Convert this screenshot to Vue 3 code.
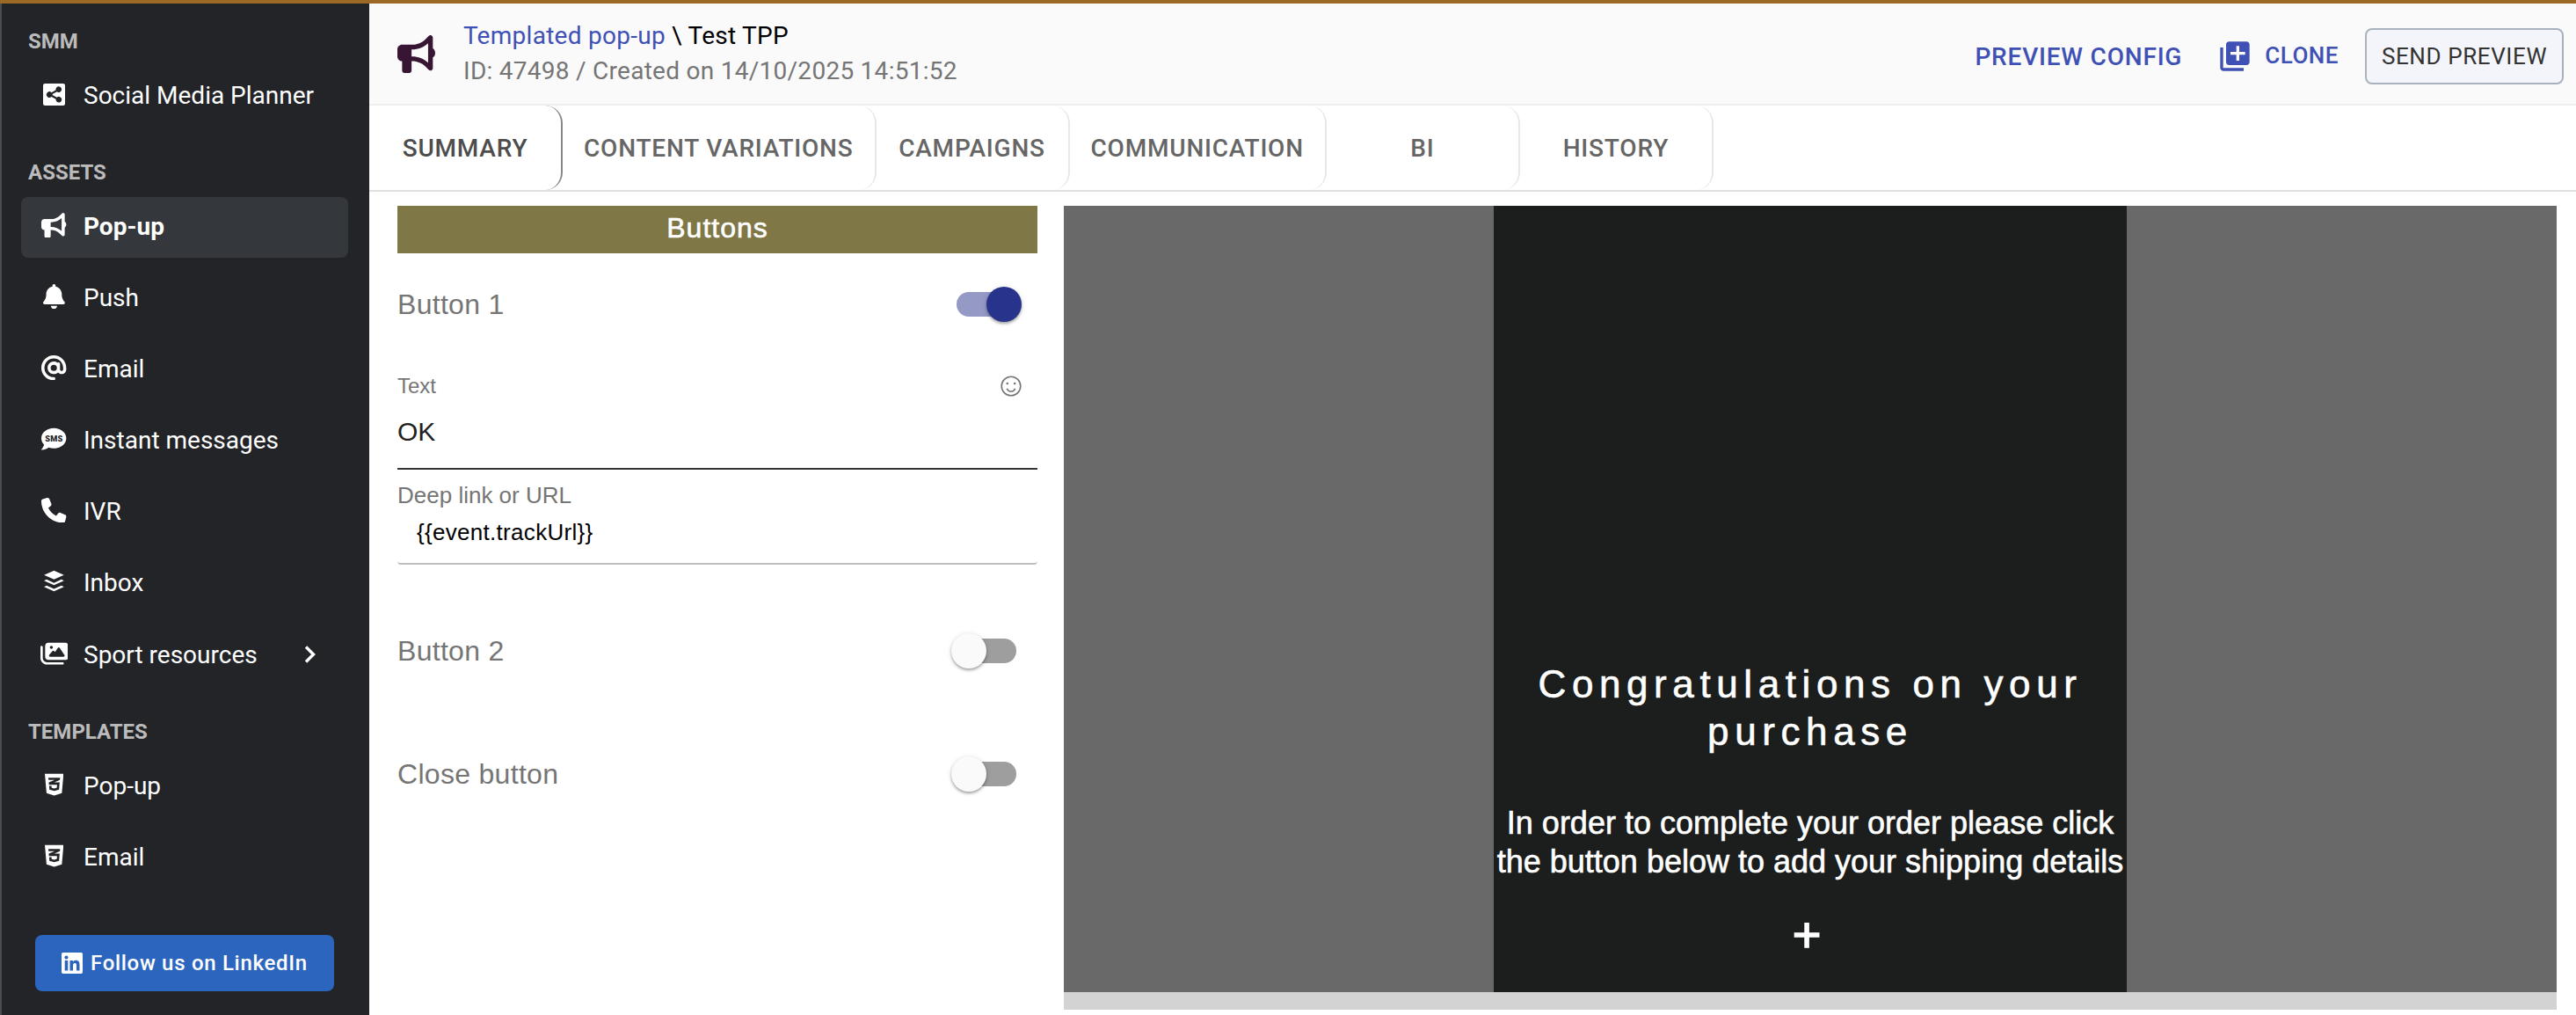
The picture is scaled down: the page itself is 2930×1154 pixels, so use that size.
<script setup>
import { ref } from 'vue'

const icons = {
  share: {
    box: '0 32 448 448',
    d: 'M40 32H408Q448 32 448 72V440Q448 480 408 480H40Q0 480 0 440V72Q0 32 40 32ZM320 92a60 60 0 0 0-59 72l-89 50a60 60 0 1 0 0 86l89 50a60 60 0 1 0 20-37l-90-47v-20l90-47A60 60 0 1 0 320 92Z',
  },
  bullhorn: {
    box: '0 0 512 512',
    d: 'M480 32c0-12.9-7.8-24.6-19.8-29.6s-25.7-2.2-34.9 6.9L381.7 53c-48 48-113.1 75-181 75H64c-35.3 0-64 28.7-64 64v96c0 35.3 28.7 64 64 64v128c0 17.7 14.3 32 32 32h64c17.7 0 32-14.3 32-32V352h8.7c67.9 0 133 27 181 75l43.6 43.6c9.2 9.2 22.9 11.9 34.9 6.9s19.8-16.6 19.8-29.6V300.4c18.6-8.8 32-32.5 32-60.4s-13.4-51.6-32-60.4V32zm-64 76.7v262.6C357.2 317.8 280.5 288 200.7 288H192v-96h8.7c79.8 0 156.5-29.8 215.3-83.3z',
  },
  bell: {
    box: '0 0 448 512',
    d: 'M224 0c-17.7 0-32 14.3-32 32v19.2C119 66 64 130.6 64 208v18.8c0 47-17.3 92.4-48.5 127.6l-7.4 8.3c-8.4 9.4-10.4 22.9-5.3 34.4S19.4 416 32 416h384c12.6 0 24-7.4 29.2-18.9s3.1-25-5.3-34.4l-7.4-8.3C401.3 319.2 384 273.9 384 226.8V208c0-77.4-55-142-128-156.8V32c0-17.7-14.3-32-32-32zm45.3 493.3c12-12 18.7-28.3 18.7-45.3H160c0 17 6.7 33.3 18.7 45.3s28.3 18.7 45.3 18.7 33.3-6.7 45.3-18.7z',
  },
  at: {
    box: '0 0 512 512',
    d: 'M256 64C150 64 64 150 64 256s86 192 192 192c17.7 0 32 14.3 32 32s-14.3 32-32 32C114.6 512 0 397.4 0 256S114.6 0 256 0s256 114.6 256 256v32c0 53-43 96-96 96-29.3 0-55.6-13.2-73.2-33.9C320 371.1 289.5 384 256 384c-70.7 0-128-57.3-128-128s57.3-128 128-128c27.9 0 53.7 8.9 74.7 24.1 5.7-5 13.1-8.1 21.3-8.1 17.7 0 32 14.3 32 32v112c0 17.7 14.3 32 32 32s32-14.3 32-32v-32c0-106-86-192-192-192zm64 192a64 64 0 1 0-128 0 64 64 0 1 0 128 0z',
  },
  sms: {
    box: '0 0 512 512',
    d: 'M256 32C114.6 32 0 125.1 0 240c0 49.6 21.4 95 57 130.7C44.5 421.1 2.7 466 2.2 466.5c-2.2 2.3-2.8 5.7-1.5 8.7S4.8 480 8 480c66.3 0 116-31.8 140.6-51.4 32.7 12.3 69 19.4 107.4 19.4 141.4 0 256-93.1 256-208S397.4 32 256 32z',
    label: 'SMS',
  },
  phone: {
    box: '0 0 512 512',
    d: 'M164.9 24.6c-7.7-18.6-28-28.5-47.4-23.2l-88 24C12.1 30.2 0 46 0 64c0 247.4 200.6 448 448 448 18 0 33.8-12.1 38.6-29.5l24-88c5.3-19.4-4.6-39.7-23.2-47.4l-96-40c-16.3-6.8-35.2-2.1-46.3 11.6L304.7 368C234.3 334.7 177.3 277.7 144 207.3L193.3 167c13.7-11.2 18.4-30 11.6-46.3l-40-96z',
  },
  buffer: {
    box: '0 0 448 512',
    d: 'M224 30L428 122L224 210L20 122ZM20 238L72 214L224 282L376 214L428 238L224 328ZM20 364L72 340L224 408L376 340L428 364L224 456Z',
  },
  images: {
    box: '0 0 576 512',
    d: 'M160 32c-35.3 0-64 28.7-64 64v224c0 35.3 28.7 64 64 64h352c35.3 0 64-28.7 64-64V96c0-35.3-28.7-64-64-64H160zm236 106.7l96 144c4.9 7.4 5.4 16.8 1.2 24.6S480.9 320 472 320H200c-9.2 0-17.6-5.3-21.6-13.6s-2.9-18.2 2.9-25.4l64-80c4.6-5.7 11.4-9 18.7-9s14.2 3.3 18.7 9l17.3 21.6 56-84C360.5 132 368 128 376 128s15.5 4 20 10.7zM192 128a32 32 0 1 1 64 0 32 32 0 1 1-64 0zM48 120c0-13.3-10.7-24-24-24S0 106.7 0 120v224c0 75.1 60.9 136 136 136h320c13.3 0 24-10.7 24-24s-10.7-24-24-24H136c-48.6 0-88-39.4-88-88V120z',
  },
  css3: {
    box: '0 0 384 512',
    d: 'M0 32l34.9 395.8L192 480l157.1-52.2L384 32H0zm313.1 80l-4.8 47.3L193 208.6l-.3.1h111.5l-12.8 146.6-98.2 28.7-98.8-29.2-6.4-73.9h48.9l3.2 38.3 52.6 13.3 54.7-15.4 3.7-61.6-166.3-.5v-.1l-.2.1-3.6-46.3L193.1 162l6.5-2.7H76.7L70.9 112h242.2z',
  },
}

const menu = [
  { title: 'SMM', items: [{ label: 'Social Media Planner', icon: 'share' }] },
  {
    title: 'ASSETS',
    items: [
      { label: 'Pop-up', icon: 'bullhorn', active: true },
      { label: 'Push', icon: 'bell' },
      { label: 'Email', icon: 'at' },
      { label: 'Instant messages', icon: 'sms' },
      { label: 'IVR', icon: 'phone' },
      { label: 'Inbox', icon: 'buffer' },
      { label: 'Sport resources', icon: 'images', expandable: true },
    ],
  },
  {
    title: 'TEMPLATES',
    items: [
      { label: 'Pop-up', icon: 'css3' },
      { label: 'Email', icon: 'css3' },
    ],
  },
]

const tabs = ['SUMMARY', 'CONTENT VARIATIONS', 'CAMPAIGNS', 'COMMUNICATION', 'BI', 'HISTORY']
const activeTab = ref('SUMMARY')

const button1 = ref(true)
const button2 = ref(false)
const closeButton = ref(false)
const deepLink = '{{event.trackUrl}}'
</script>

<template>
  <div class="app">
    <aside class="sidebar">
      <section v-for="group in menu" :key="group.title" class="group">
        <h3 class="group-title">{{ group.title }}</h3>
        <a
          v-for="item in group.items"
          :key="item.label"
          class="item"
          :class="{ active: item.active, expandable: item.expandable }"
        >
          <span class="item-icon">
            <svg :viewBox="icons[item.icon].box" :class="item.icon">
              <path :d="icons[item.icon].d" fill="currentColor" fill-rule="evenodd" />
              <text v-if="icons[item.icon].label" class="sms-text" x="258" y="300">{{ icons[item.icon].label }}</text>
            </svg>
          </span>
          <span class="item-label">{{ item.label }}</span>
          <svg v-if="item.expandable" class="chevron" viewBox="0 0 14 20">
            <path d="M2 1.5L10.5 10L2 18.5" fill="none" stroke="currentColor" stroke-width="3.4" />
          </svg>
        </a>
      </section>
      <a class="linkedin">
        <svg viewBox="0 32 448 448">
          <path
            fill="currentColor"
            fill-rule="evenodd"
            d="M416 32H31.9C14.3 32 0 46.5 0 64.3v383.4C0 465.5 14.3 480 31.9 480H416c17.6 0 32-14.5 32-32.3V64.3c0-17.8-14.4-32.3-32-32.3zM135.4 416H69V202.2h66.5V416zm-33.2-243c-21.3 0-38.5-17.3-38.5-38.5S80.9 96 102.2 96c21.2 0 38.5 17.3 38.5 38.5 0 21.3-17.2 38.5-38.5 38.5zm282.1 243h-66.4V312c0-24.8-.5-56.7-34.5-56.7-34.6 0-39.9 27-39.9 54.9V416h-66.4V202.2h63.7v29.2h.9c8.9-16.8 30.6-34.5 62.2-34.5 66.5 0 78.9 43.8 78.9 100.9V416z"
          />
        </svg>
        <span>Follow us on LinkedIn</span>
      </a>
    </aside>

    <main class="main">
      <header class="header">
        <svg class="header-icon" :viewBox="icons.bullhorn.box">
          <path :d="icons.bullhorn.d" fill="currentColor" fill-rule="evenodd" />
        </svg>
        <div class="titles">
          <div class="crumbs"><a>Templated pop-up</a> \ Test TPP</div>
          <div class="meta">ID: 47498 / Created on 14/10/2025 14:51:52</div>
        </div>
        <div class="actions">
          <button class="text-btn config">PREVIEW CONFIG</button>
          <button class="text-btn clone">
            <svg viewBox="0 0 24 24">
              <path
                fill="currentColor"
                d="M4 6H2v14c0 1.1.9 2 2 2h14v-2H4V6zm16-4H8c-1.1 0-2 .9-2 2v12c0 1.1.9 2 2 2h12c1.1 0 2-.9 2-2V4c0-1.1-.9-2-2-2zm-1 9h-4v4h-2v-4H9V9h4V5h2v4h4v2z"
              />
            </svg>
            <span>CLONE</span>
          </button>
          <button class="send">SEND PREVIEW</button>
        </div>
      </header>

      <nav class="tabs">
        <button
          v-for="tab in tabs"
          :key="tab"
          class="tab"
          :class="{ active: tab === activeTab }"
          @click="activeTab = tab"
        >
          {{ tab }}
        </button>
      </nav>

      <div class="content">
        <form class="form" @submit.prevent>
          <div class="bar">Buttons</div>

          <div class="row first">
            <span>Button 1</span>
            <span class="toggle" :class="{ on: button1 }" @click="button1 = !button1"></span>
          </div>

          <div class="field text-field">
            <div class="field-head">
              <span>Text</span>
              <svg class="smiley" viewBox="0 0 24 24" fill="none" stroke="currentColor" stroke-width="1.6">
                <circle cx="12" cy="12" r="10.8" />
                <path d="M7.2 14.8Q8.8 18 12 18T16.8 14.8" />
                <circle cx="7.8" cy="9" r="1.3" fill="currentColor" stroke="none" />
                <circle cx="16.2" cy="9" r="1.3" fill="currentColor" stroke="none" />
              </svg>
            </div>
            <div class="field-value">OK</div>
          </div>

          <div class="field link-field">
            <div class="field-head">Deep link or URL</div>
            <div class="field-value">{{ deepLink }}</div>
          </div>

          <div class="row second">
            <span>Button 2</span>
            <span class="toggle" :class="{ on: button2 }" @click="button2 = !button2"></span>
          </div>
          <div class="row third">
            <span>Close button</span>
            <span class="toggle" :class="{ on: closeButton }" @click="closeButton = !closeButton"></span>
          </div>
        </form>

        <div class="preview">
          <div class="screen">
            <div class="popup">
              <h1>Congratulations on your<br />purchase</h1>
              <p>In order to complete your order please click<br />the button below to add your shipping details</p>
              <div class="plus">+</div>
            </div>
          </div>
        </div>
      </div>
    </main>
  </div>
</template>

<style>
body {
  margin: 0;
  background: #fff;
}
</style>

<style scoped>
* {
  box-sizing: border-box;
}

.app {
  display: flex;
  width: 2930px;
  height: 1154px;
  overflow: hidden;
  border-top: 4px solid #9c6825;
  background: #fff;
  font-family: Roboto, sans-serif;
}

svg {
  display: block;
  flex: none;
}

button {
  margin: 0;
  padding: 0;
  border: 0;
  background: none;
  font-family: inherit;
}

/* sidebar */
.sidebar {
  flex: none;
  width: 420px;
  padding: 29px 24px 0 22px;
  border-left: 2px solid #4b4c4f;
  background: #232427;
  color: #fff;
}

.group {
  display: flow-root;
  margin-bottom: 26px;
}

.group-title {
  margin: 0 0 14px 8px;
  font-size: 24px;
  font-weight: 700;
  line-height: 28px;
  color: #bbbbbc;
}

.item {
  display: flex;
  align-items: center;
  height: 69px;
  margin-bottom: 12px;
  padding-bottom: 3px;
  border-radius: 8px;
  font-size: 28px;
}

.item.active {
  background: #34373c;
  font-weight: 700;
}

.item.expandable {
  margin-top: 13px;
}

.item-icon {
  display: flex;
  justify-content: center;
  width: 75px;
  padding-bottom: 2px;
}

.item-icon svg {
  height: 28.4px;
}

.item-icon svg.share {
  height: 25px;
}

.sms-text {
  font-size: 165px;
  font-weight: 900;
  text-anchor: middle;
  letter-spacing: 4px;
  fill: #232427;
}

.item-label {
  margin-left: -4px;
  padding-top: 1px;
  line-height: 34px;
}

.chevron {
  width: 14px;
  height: 20px;
  margin-left: auto;
  margin-right: 36px;
}

.linkedin {
  display: flex;
  align-items: center;
  width: 340px;
  height: 64px;
  margin: 41px 0 0 16px;
  padding: 0 0 1px 30px;
  border-radius: 8px;
  background: #2c65bd;
  font-size: 24px;
  font-weight: 500;
  letter-spacing: 0.7px;
}

.linkedin svg {
  width: 24px;
  height: 24px;
  margin-right: 9px;
}

/* header */
.main {
  flex: 1;
  min-width: 0;
}

.header {
  display: flex;
  height: 116px;
  padding: 0 14px 0 32px;
  border-bottom: 2px solid #eee;
  background: #fafafa;
}

.header-icon {
  width: 43px;
  height: 43px;
  margin-top: 36px;
  color: #371533;
}

.titles {
  margin: 17px 0 0 32px;
  font-size: 28px;
  line-height: 40px;
  letter-spacing: 0.27px;
  color: #000;
}

.crumbs a {
  color: #3f51b5;
}

.meta {
  color: #757575;
}

.actions {
  display: flex;
  align-items: flex-start;
  margin-left: auto;
}

.text-btn {
  display: flex;
  align-items: center;
  height: 64px;
  margin-top: 28px;
  font-size: 28px;
  font-weight: 500;
  color: #3f51b5;
}

.config {
  letter-spacing: 0.8px;
}

.clone {
  margin: 27px 30px 0 40px;
  font-size: 26px;
  letter-spacing: 0.5px;
}

.clone svg {
  width: 40px;
  height: 40px;
  margin: 2px 14px 0 0;
}

.send {
  width: 226px;
  height: 64px;
  margin-top: 28px;
  border: 2px solid #a9b1bc;
  border-radius: 8px;
  background: #f4f5fa;
  font-size: 26px;
  letter-spacing: 0.6px;
  color: #333;
}

/* tabs */
.tabs {
  display: flex;
  height: 98px;
  border-bottom: 2px solid #e0e0e0;
}

.tab {
  min-width: 220px;
  height: 96px;
  padding: 1px 24px 0;
  border-right: 2px solid #e8e8e8;
  border-radius: 20px;
  font-size: 28px;
  font-weight: 500;
  letter-spacing: 0.8px;
  color: #666;
}

.tab.active {
  border-right-color: #888;
  color: #4d4d4d;
}

/* form */
.content {
  display: flex;
  gap: 30px;
  padding: 16px 22px 0 32px;
  font-family: 'Liberation Sans', Helvetica, sans-serif;
}

.form {
  flex: none;
  width: 728px;
}

.bar {
  height: 54px;
  padding-bottom: 4px;
  background: #7f7745;
  font-size: 32px;
  line-height: 50px;
  letter-spacing: 1px;
  text-align: center;
  color: #fff;
  -webkit-text-stroke: 0.6px #fff;
}

.row {
  display: flex;
  justify-content: space-between;
  height: 40px;
  padding-right: 18px;
  font-size: 32px;
  line-height: 40px;
  letter-spacing: 0.3px;
  color: #757575;
}

.row.first {
  margin-top: 38px;
}

.row.second {
  margin-top: 78px;
}

.row.third {
  margin-top: 100px;
}

.toggle {
  position: relative;
  width: 80px;
  height: 40px;
}

.toggle::before {
  content: '';
  position: absolute;
  top: 6px;
  left: 2px;
  width: 72px;
  height: 28px;
  border-radius: 14px;
  background: #9e9e9e;
}

.toggle::after {
  content: '';
  position: absolute;
  top: 0;
  left: 0;
  width: 40px;
  height: 40px;
  border-radius: 50%;
  background: #fafafa;
  box-shadow: 0 2px 3px rgba(0, 0, 0, 0.3), 0 1px 6px rgba(0, 0, 0, 0.12);
}

.toggle.on::before {
  left: 6px;
  background: #9499c6;
}

.toggle.on::after {
  left: 40px;
  background: #28348b;
}

.field-head {
  display: flex;
  justify-content: space-between;
  align-items: center;
  height: 30px;
  color: #757575;
}

.text-field {
  margin-top: 58px;
  padding-bottom: 21px;
  border-bottom: 2px solid #333;
  font-size: 24px;
}

.smiley {
  width: 24px;
  height: 24px;
  margin-right: 18px;
}

.text-field .field-value {
  margin-top: 17px;
  font-size: 30px;
  line-height: 40px;
  color: #212121;
}

.link-field {
  margin-top: 14px;
  padding-bottom: 15px;
  border-bottom: 2px solid #bdbdbd;
  border-radius: 0 0 4px 4px;
  font-size: 26px;
}

.link-field .field-value {
  margin-top: 7px;
  padding-left: 22px;
  line-height: 40px;
  letter-spacing: 0.3px;
  color: #000;
}

/* preview */
.preview {
  flex: 1;
  height: 914px;
  background: #d3d3d3;
}

.screen {
  display: flex;
  justify-content: center;
  height: 894px;
  background: #696969;
}

.popup {
  width: 720px;
  padding-top: 517px;
  background: #1c1e1d;
  color: #fff;
  text-align: center;
  white-space: nowrap;
}

.popup h1 {
  margin: 0;
  font-size: 44px;
  font-weight: 400;
  line-height: 54px;
  letter-spacing: 6.6px;
  -webkit-text-stroke: 0.6px #fff;
}

.popup p {
  margin: 55px 0 0;
  font-size: 36px;
  line-height: 44px;
  -webkit-text-stroke: 0.6px #fff;
}

.plus {
  margin: 31px 8px 0 0;
  font-size: 56px;
  line-height: 60px;
  -webkit-text-stroke: 1.5px #fff;
}
</style>
